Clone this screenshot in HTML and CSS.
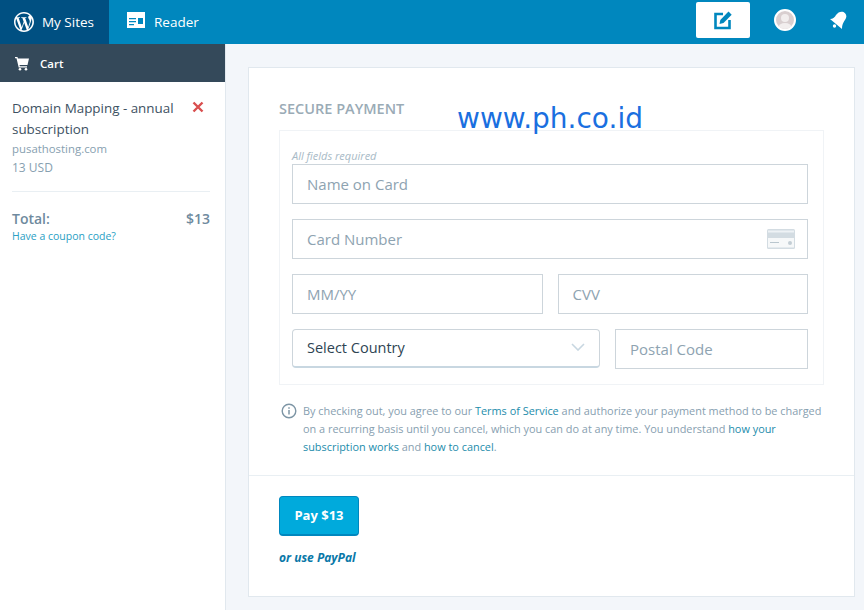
FILE: index.html
```html
<!DOCTYPE html>
<html lang="en">
<head>
  <meta charset="UTF-8" />
  <meta name="viewport" content="width=device-width, initial-scale=1.0"/>
  <title>Secure Payment</title>
  <link rel="stylesheet" href="styles.css">
</head>
<body>
  <header class="masthead">
    <a class="nav-item active">
      <svg width="20" height="20" viewBox="2 2 20 20"><path fill="#fff" d="M12 2C6.500 2 2 6.500 2 12s4.500 10 10 10 10-4.500 10-10S17.500 2 12 2zM3.500 12c0-1.200.3-2.400.7-3.500l4.100 11.200C5.400 18.300 3.500 15.400 3.500 12zm8.500 8.500c-.8 0-1.600-.1-2.400-.4l2.600-7.400 2.600 7.200c0 .1 0 .1.100.1-.9.300-1.900.5-2.900.5zm1.200-12.500c.5 0 1-.1 1-.1.500-.1.400-.7 0-.7 0 0-1.400.1-2.300.1-.9 0-2.300-.1-2.300-.1-.5 0-.5.700-.1.700 0 0 .5.100.9.100l1.300 3.700-1.900 5.600-3.100-9.300c.5 0 1-.1 1-.1.500-.1.400-.7 0-.7 0 0-1.400.1-2.300.1h-.6C6.400 4.800 9 3.500 12 3.500c2.200 0 4.200.8 5.800 2.200h-.1c-.9 0-1.500.7-1.500 1.500 0 .7.400 1.300.9 2 .3.600.7 1.300.7 2.400 0 .7-.3 1.600-.7 2.700l-.8 2.800-3.100-9.100zm3.100 11.300l2.600-7.500c.5-1.200.6-2.200.6-3 0-.3 0-.6-.1-.9.700 1.200 1 2.600 1 4.100 0 3.100-1.700 5.800-4.100 7.300z"/></svg>
      My Sites
    </a>
    <a class="nav-item">
      <svg class="reader-icon" width="18" height="16" viewBox="0 0 18 16"><path fill="#fff" fill-rule="evenodd" d="M0 0h18v16H0zM2 6v1.300h7V6zM2 9v1.300h7V9zM2 12v1.300h5V12zM11 6v6h5V6z"/></svg>
      Reader
    </a>
    <div class="masthead-right">
      <a class="write-btn">
        <svg width="22" height="22" viewBox="0 0 22 22"><path fill="none" stroke="#0087be" stroke-width="2.600" d="M11 5H3.500v14H17.500v-8"/><path fill="#0087be" d="M7.500 15l.8-4L16.500 2.500l3.200 3.200L11.500 14z"/></svg>
      </a>
      <span class="avatar"><span class="avatar-head"></span><span class="avatar-body"></span></span>
      <svg class="bell" width="22" height="22" viewBox="0 0 22 22"><path fill="#fff" d="M3 10c3 0 5-2 6-4 2-3 5-4 7.500-3 2.500 1.500 3.500 4 2.500 6-1 3-4 4.500-4 11z"/><circle fill="#fff" cx="7.500" cy="17" r="1.700"/></svg>
    </div>
  </header>

  <div class="layout">
    <aside class="sidebar">
      <div class="cart-title">
        <svg width="16" height="16" viewBox="0 0 16 16"><path fill="#fff" d="M1 2h2.500l.4 1.500H15l-1.500 6.500H5.500l.3 1.200H13v1.300H4.700L2.500 3.300H1z"/><circle fill="#fff" cx="6" cy="14.300" r="1.300"/><circle fill="#fff" cx="12" cy="14.300" r="1.300"/></svg>
        Cart
      </div>
      <div class="cart-body">
        <div class="cart-item">
          <div class="item-info">
            <div class="item-name">Domain Mapping - annual subscription</div>
            <div class="item-domain">pusathosting.com</div>
            <div class="item-price">13 USD</div>
          </div>
          <svg class="item-remove" width="12" height="12" viewBox="0 0 12 12"><path stroke="#d94f4f" stroke-width="2.400" d="M1.500 1.500l9 9M10.500 1.500l-9 9"/></svg>
        </div>
        <div class="cart-total"><span>Total:</span><span>$13</span></div>
        <a class="coupon">Have a coupon code?</a>
      </div>
    </aside>

    <main class="main">
      <section class="card">
        <div class="card-top">
          <h2 class="card-title">SECURE PAYMENT</h2>
          <div class="form-box">
            <p class="required">All fields required</p>
            <div class="field-stack">
              <div class="field">Name on Card</div>
              <div class="field">Card Number
                <svg class="card-icon" width="28" height="20" viewBox="0 0 28 20"><rect width="28" height="20" rx="1.500" fill="#d3dce2"/><rect x="1" y="1.500" width="26" height="2" fill="#eef2f5"/><rect x="1" y="9" width="26" height="9.500" fill="#f6f8f9"/><rect x="3" y="13" width="9" height="1" fill="#b9c6ce"/><circle cx="23" cy="14" r="2" fill="#c3ced5"/></svg>
              </div>
              <div class="field-row">
                <div class="field">MM/YY</div>
                <div class="field">CVV</div>
              </div>
              <div class="field-row country-row">
                <div class="select">Select Country
                  <svg width="14" height="8" viewBox="0 0 14 8"><path fill="none" stroke="#c8d7e1" stroke-width="1.600" d="M1 1l6 6 6-6"/></svg>
                </div>
                <div class="field">Postal Code</div>
              </div>
            </div>
          </div>
          <div class="terms">
            <svg class="info" width="16" height="16" viewBox="0 0 16 16"><circle cx="8" cy="8" r="6.800" fill="none" stroke="#7d95a5" stroke-width="1.400"/><path stroke="#7d95a5" stroke-width="1.500" d="M8 7v4.500M8 4.200v1.600"/></svg>
            <p>By checking out, you agree to our <a>Terms of Service</a> and authorize your payment method to be charged on a recurring basis until you cancel, which you can do at any time. You understand <a>how your subscription works</a> and <a>how to cancel</a>.</p>
          </div>
        </div>
        <div class="card-bottom">
          <button class="pay-btn">Pay $13</button>
          <a class="paypal">or use PayPal</a>
        </div>
      </section>
    </main>
  </div>

  <div class="watermark">www.ph.co.id</div>
</body>
</html>
```

FILE: styles.css
```css
* { box-sizing: border-box; }
body {
  margin: 0;
  height: 610px;
  overflow: hidden;
  font-family: "Open Sans", sans-serif;
  color: #2e4453;
  background: #f3f6fa;
  position: relative;
}

/* top bar */
.masthead {
  display: flex;
  align-items: stretch;
  height: 44px;
  background: #0087be;
  color: #fff;
}
.nav-item {
  display: flex;
  align-items: center;
  gap: 8px;
  padding: 0 15px 0 14px;
  font-size: 13.500px;
  color: #fff;
}
.nav-item + .nav-item { padding-left: 18px; gap: 9px; }
.nav-item.active { background: #005082; width: 109px; white-space: nowrap; }
.reader-icon { margin-bottom: 4px; }
.masthead-right {
  margin-left: auto;
  display: flex;
  align-items: flex-start;
}
.write-btn {
  display: flex;
  align-items: center;
  justify-content: center;
  width: 54px;
  height: 36px;
  margin-top: 2px;
  background: #fff;
  border-radius: 2px;
}
.avatar {
  position: relative;
  overflow: hidden;
  width: 22px;
  height: 22px;
  margin: 9px 0 0 24px;
  border-radius: 50%;
  background: #d9cfd0;
  border: 2px solid #fff;
}
.avatar-head {
  position: absolute;
  left: 5px;
  top: 3px;
  width: 8px;
  height: 8px;
  border-radius: 50%;
  background: #f2eeee;
}
.avatar-body {
  position: absolute;
  left: 2px;
  top: 12px;
  width: 14px;
  height: 10px;
  border-radius: 50%;
  background: #f2eeee;
}
.bell { margin: 9px 15px 0 31px; }

/* sidebar */
.layout {
  display: grid;
  grid-template-columns: 226px 1fr;
  height: 566px;
}
.sidebar {
  background: #fff;
  border-right: 1px solid #e1e8ee;
}
.cart-title {
  display: flex;
  align-items: center;
  gap: 10px;
  height: 38px;
  padding-left: 14px;
  background: #34495a;
  color: #fff;
  font-size: 11.500px;
  font-weight: 600;
}
.cart-body { padding: 16px 15px 0 12px; }
.cart-item {
  display: flex;
  justify-content: space-between;
  gap: 10px;
  padding-bottom: 14px;
  border-bottom: 1px solid #e9eff3;
}
.item-name {
  font-size: 13.400px;
  line-height: 21px;
  color: #3d5162;
}
.item-domain, .item-price {
  font-size: 12px;
  line-height: 18px;
  color: #87a0b0;
}
.item-domain { font-size: 11.400px; }
.item-price { margin-top: 1px; }
.item-remove { flex: none; margin: 3px 6px 0 0; }
.cart-total {
  display: flex;
  justify-content: space-between;
  margin-top: 17px;
  font-size: 14px;
  line-height: 19px;
  font-weight: 600;
  color: #6f8a9e;
}
.coupon {
  display: block;
  font-size: 10.500px;
  line-height: 16px;
  color: #2aa0c4;
}

/* payment card */
.main { padding: 23px 9px 13px 22px; }
.card {
  height: 530px;
  background: #fff;
  border: 1px solid #e1e8ee;
}
.card-top { padding: 0 30px; }
.card-title {
  margin: 0;
  padding-top: 31px;
  height: 62px;
  font-size: 14.500px;
  line-height: 20px;
  font-weight: 600;
  color: #9aabb6;
}
.form-box {
  height: 255px;
  padding: 0 15px 0 12px;
  border: 1px solid #f0f3f6;
}
.required {
  margin: 0;
  padding-top: 18px;
  height: 33px;
  font-size: 11px;
  line-height: 14px;
  font-style: italic;
  color: #a8bac6;
}
.field-stack {
  display: flex;
  flex-direction: column;
  gap: 15px;
}
.field-row {
  display: grid;
  grid-template-columns: 1fr 1fr;
  gap: 15px;
}
.country-row { grid-template-columns: 308px 193px; }
.field {
  position: relative;
  display: flex;
  align-items: center;
  height: 40px;
  padding: 0 14px;
  border: 1px solid #cdd5db;
  font-size: 15px;
  color: #8ea3b1;
}
.card-icon {
  position: absolute;
  right: 12px;
  top: 9px;
}
.select {
  display: flex;
  align-items: center;
  justify-content: space-between;
  height: 39px;
  padding: 0 14px 2px;
  border: 1px solid #cdd5db;
  border-bottom: 2px solid #c8d7e1;
  border-radius: 4px;
  font-size: 14.500px;
  font-weight: 500;
  color: #2e4453;
}
.terms {
  display: flex;
  gap: 6px;
  margin-top: 17px;
}
.info { flex: none; margin: 1px 0 0 2px; }
.terms p {
  margin: 0;
  font-size: 10.900px;
  line-height: 18px;
  color: #87a0b0;
}
.terms a { color: #1c8cab; }
.card-bottom {
  margin-top: 19px;
  padding: 20px 30px 0;
  border-top: 1px solid #e9eff3;
}
.pay-btn {
  display: block;
  width: 80px;
  height: 40px;
  padding: 0 0 2px;
  background: #00aadc;
  border: 1px solid #0087be;
  border-bottom-width: 2px;
  border-radius: 4px;
  color: #fff;
  font-family: "Open Sans", sans-serif;
  font-size: 13px;
  font-weight: 700;
}
.paypal {
  display: block;
  margin-top: 14px;
  font-size: 12px;
  line-height: 16px;
  font-style: italic;
  font-weight: 700;
  color: #0a78a8;
}

/* stamped over the picture */
.watermark {
  position: absolute;
  left: 457px;
  top: 99px;
  font-family: "DejaVu Sans", sans-serif;
  font-size: 28px;
  line-height: 40px;
  color: #1a6fe0;
  white-space: nowrap;
}
```
